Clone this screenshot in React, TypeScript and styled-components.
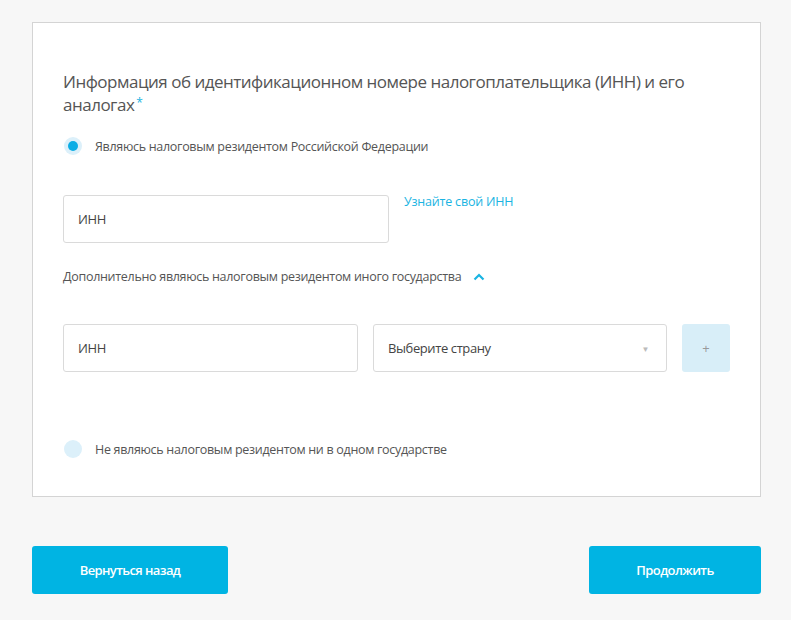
import { useState } from "react";
import styled, { createGlobalStyle } from "styled-components";

const GlobalStyle = createGlobalStyle`
  html, body {
    margin: 0;
    padding: 0;
    background: #f7f7f7;
    font-family: "Open Sans", "Liberation Sans", sans-serif;
  }
`;

const Page = styled.div`
  width: 791px;
  padding: 22px 30px 27px 32px;
  box-sizing: border-box;
`;

const Card = styled.section`
  background: #fff;
  border: 1px solid #d4d4d4;
  padding: 47px 30px 38px 30px;
  height: 475px;
  box-sizing: border-box;
`;

const Title = styled.h2`
  margin: 0 0 21px;
  font-size: 17px;
  font-weight: 400;
  line-height: 23px;
  letter-spacing: -0.5px;
  color: #555;
  max-width: 660px;
`;

const Star = styled.sup`
  color: #1ab4e2;
  font-size: 12px;
  line-height: 0;
  margin-left: 2px;
  vertical-align: 4px;
`;

const RadioRow = styled.label`
  display: flex;
  align-items: center;
  gap: 13px;
  font-size: 12.5px;
  letter-spacing: -0.3px;
  color: #555;
  cursor: pointer;
`;

const RadioDot = styled.span<{ $checked?: boolean }>`
  width: 18px;
  height: 18px;
  border-radius: 50%;
  background: #dcf0fa;
  display: flex;
  align-items: center;
  justify-content: center;
  margin-left: 1px;

  &::after {
    content: "";
    width: 10px;
    height: 10px;
    border-radius: 50%;
    background: ${(p) => (p.$checked ? "#0bade5" : "transparent")};
  }
`;

const InnRow = styled.div`
  display: flex;
  align-items: flex-start;
  gap: 15px;
  margin-top: 40px;
`;

const Field = styled.div<{ $width: number }>`
  width: ${(p) => p.$width}px;
  height: 48px;
  border: 1px solid #dadada;
  border-radius: 3px;
  display: flex;
  align-items: center;
  padding: 0 14px;
  box-sizing: border-box;
  font-size: 13px;
  letter-spacing: -0.4px;
  color: #444;
`;

const SelectField = styled(Field)`
  justify-content: space-between;
  padding-right: 17px;
`;

const Caret = styled.span`
  font-size: 8px;
  color: #bbb;
`;

const Link = styled.a`
  font-size: 12.5px;
  letter-spacing: -0.2px;
  color: #1ab4e2;
  text-decoration: none;
  margin-top: -2px;
`;

const Toggle = styled.div`
  display: flex;
  align-items: center;
  gap: 12px;
  margin-top: 25px;
  font-size: 12.5px;
  letter-spacing: -0.3px;
  color: #555;
`;

const ForeignRow = styled.div`
  display: flex;
  gap: 15px;
  margin-top: 39px;
`;

const AddButton = styled.button`
  width: 48px;
  height: 48px;
  border: none;
  border-radius: 3px;
  background: #d8eef8;
  color: #999;
  font-size: 13px;
  font-family: inherit;
`;

const Spacer = styled.div`
  height: 68px;
`;

const Footer = styled.div`
  display: flex;
  justify-content: space-between;
  margin-top: 49px;
`;

const PrimaryButton = styled.button<{ $width: number }>`
  width: ${(p) => p.$width}px;
  height: 48px;
  border: none;
  border-radius: 3px;
  background: #00b4e3;
  color: #fff;
  font-family: inherit;
  font-size: 13px;
  font-weight: 600;
  letter-spacing: -0.6px;
  cursor: pointer;
`;

export default function App() {
  const [open] = useState(true);
  return (
    <>
      <GlobalStyle />
      <Page>
        <Card>
          <Title>
            Информация об идентификационном номере налогоплательщика (ИНН) и его
            аналогах<Star>*</Star>
          </Title>
          <RadioRow>
            <RadioDot $checked />
            Являюсь налоговым резидентом Российской Федерации
          </RadioRow>
          <InnRow>
            <Field $width={326}>ИНН</Field>
            <Link href="#">Узнайте свой ИНН</Link>
          </InnRow>
          <Toggle>
            Дополнительно являюсь налоговым резидентом иного государства
            <svg width="12" height="8" viewBox="0 0 12 8">
              <path d="M1.5 6.5 6 2l4.5 4.5" fill="none" stroke="#1ab4e2" strokeWidth="2.2" />
            </svg>
          </Toggle>
          {open && (
            <ForeignRow>
              <Field $width={295}>ИНН</Field>
              <SelectField $width={294}>
                Выберите страну
                <Caret>▼</Caret>
              </SelectField>
              <AddButton>+</AddButton>
            </ForeignRow>
          )}
          <Spacer />
          <RadioRow>
            <RadioDot />
            Не являюсь налоговым резидентом ни в одном государстве
          </RadioRow>
        </Card>
        <Footer>
          <PrimaryButton $width={196}>Вернуться назад</PrimaryButton>
          <PrimaryButton $width={172}>Продолжить</PrimaryButton>
        </Footer>
      </Page>
    </>
  );
}
